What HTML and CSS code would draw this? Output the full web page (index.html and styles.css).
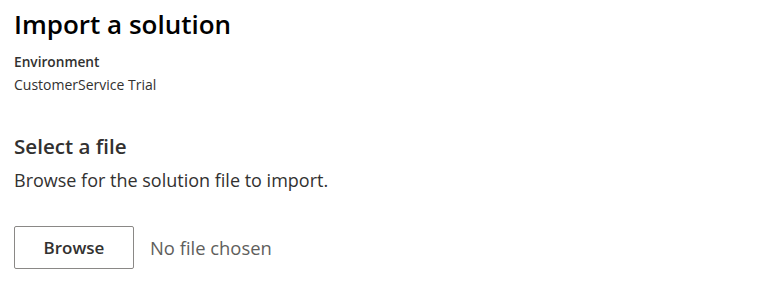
FILE: index.html
```html
<!DOCTYPE html>
<html lang="en">
<head>
<meta charset="utf-8">
<title>Import a solution</title>
<link rel="stylesheet" href="styles.css">
</head>
<body>
<main class="panel">
  <h1 class="title">Import a solution</h1>
  <div class="env">
    <div class="env-label">Environment</div>
    <div class="env-value">CustomerService Trial</div>
  </div>
  <section class="file">
    <h2 class="file-title">Select a file</h2>
    <p class="file-desc">Browse for the solution file to import.</p>
    <div class="picker">
      <button class="browse" type="button">Browse</button>
      <span class="chosen">No file chosen</span>
    </div>
  </section>
</main>
</body>
</html>
```
FILE: styles.css
```css
html, body {
  margin: 0;
  padding: 0;
  background: #ffffff;
}
body {
  font-family: "Open Sans", "Noto Sans", sans-serif;
  color: #323130;
}
.panel {
  padding: 6px 14px 0 14px;
}
.title {
  margin: 0;
  font-size: 26px;
  font-weight: 600;
  line-height: 36px;
  color: #000000;
}
.env {
  margin-top: 10px;
}
.env-label {
  font-size: 13.7px;
  font-weight: 600;
  line-height: 20px;
  color: #323130;
}
.env-value {
  margin-top: 3px;
  font-size: 14px;
  line-height: 20px;
  color: #323130;
}
.file {
  margin-top: 37px;
}
.file-title {
  margin: 0;
  font-size: 20.6px;
  font-weight: 600;
  line-height: 28px;
  color: #323130;
}
.file-desc {
  margin: 8px 0 0 0;
  font-size: 18px;
  line-height: 24px;
  color: #323130;
}
.picker {
  margin-top: 34px;
  display: flex;
  align-items: center;
  gap: 16px;
}
.browse {
  width: 120px;
  height: 43px;
  border: 1px solid #8a8886;
  border-radius: 2px;
  background: #ffffff;
  font-family: inherit;
  font-size: 17px;
  font-weight: 600;
  color: #323130;
  padding: 0;
}
.chosen {
  font-size: 18.4px;
  color: #605e5c;
}
```
